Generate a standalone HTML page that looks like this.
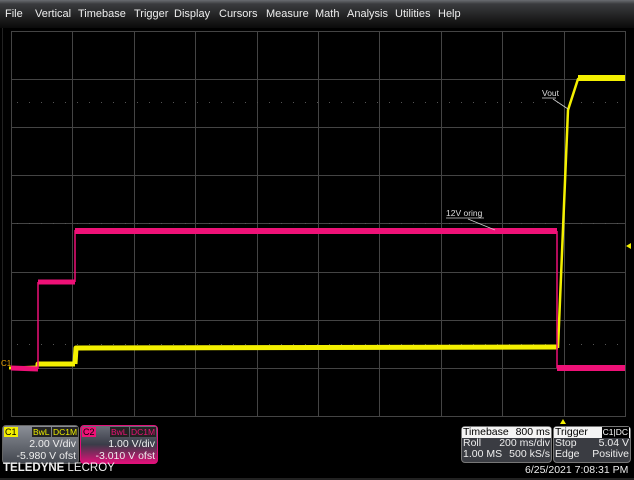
<!DOCTYPE html>
<html><head><meta charset="utf-8"><style>
*{margin:0;padding:0}
body{width:634px;height:480px;background:#000;overflow:hidden;font-family:"Liberation Sans",sans-serif;position:relative}
.menu{position:absolute;left:0;top:0;width:634px;height:28px;background:linear-gradient(#6a6d72 0,#3a3b3e 4px,#1a1a1a 20px,#0a0a0a 28px);color:#eee;font-size:11px}
.menu span{position:absolute;top:8px}
.box{position:absolute;border-radius:4px;font-size:10.5px;color:#eee}
</style></head><body>
<div class="menu">
<span style="left:5px">File</span><span style="left:35px">Vertical</span><span style="left:78px">Timebase</span><span style="left:134px">Trigger</span><span style="left:174px">Display</span><span style="left:219px">Cursors</span><span style="left:266px">Measure</span><span style="left:315px">Math</span><span style="left:347px">Analysis</span><span style="left:395px">Utilities</span><span style="left:438px">Help</span>
</div>
<svg style="position:absolute;left:0;top:0" width="634" height="480">
<line x1="2.5" y1="28" x2="2.5" y2="420" stroke="#222"/>
<g stroke="#444" stroke-width="1">
<rect x="11.5" y="31.5" width="614" height="385" fill="none"/>
<line x1="72.5" y1="31" x2="72.5" y2="417"/><line x1="134.5" y1="31" x2="134.5" y2="417"/><line x1="195.5" y1="31" x2="195.5" y2="417"/><line x1="257.5" y1="31" x2="257.5" y2="417"/><line x1="318.5" y1="31" x2="318.5" y2="417"/><line x1="379.5" y1="31" x2="379.5" y2="417"/><line x1="441.5" y1="31" x2="441.5" y2="417"/><line x1="502.5" y1="31" x2="502.5" y2="417"/><line x1="564.5" y1="31" x2="564.5" y2="417"/>
<line x1="11" y1="79.5" x2="626" y2="79.5"/><line x1="11" y1="127.5" x2="626" y2="127.5"/><line x1="11" y1="175.5" x2="626" y2="175.5"/><line x1="11" y1="223.5" x2="626" y2="223.5"/><line x1="11" y1="272.5" x2="626" y2="272.5"/><line x1="11" y1="320.5" x2="626" y2="320.5"/><line x1="11" y1="368.5" x2="626" y2="368.5"/>
</g>
<g stroke="#555" stroke-dasharray="1 11">
<line x1="17" y1="102.5" x2="626" y2="102.5"/><line x1="17" y1="223.5" x2="626" y2="223.5"/><line x1="17" y1="344.5" x2="626" y2="344.5"/>
</g>
<g fill="none" stroke="#f4f000" stroke-linejoin="round">
<polyline points="9,368 38,367" stroke-width="3"/>
<polyline points="38,366 38,364 75,364" stroke-width="5"/>
<polyline points="75,364 76,348 558,347" stroke-width="5"/>
<polyline points="558,348 568,110 578,79 625,78" stroke-width="2.5"/>
<polyline points="578,78 625,78" stroke-width="6"/>
</g>
<g fill="none" stroke="#ee1177" stroke-linejoin="round">
<polyline points="11,368 38,369" stroke-width="5"/>
<polyline points="38,369 38,282" stroke-width="1.5"/>
<polyline points="38,282 75,282" stroke-width="5"/>
<polyline points="75,282 75,230" stroke-width="1.5"/>
<polyline points="75,231 557,231" stroke-width="6"/>
<polyline points="557,231 557,368" stroke-width="1.5"/>
<polyline points="557,368 625,368" stroke-width="6"/>
</g>
<text x="1" y="366" fill="#e8a000" font-size="8">C1</text>
<text x="542" y="96" fill="#ddd" font-size="8.5">Vout</text>
<line x1="542" y1="98" x2="556" y2="98" stroke="#ccc" stroke-width="0.8"/>
<line x1="553" y1="99" x2="568" y2="109" stroke="#ccc" stroke-width="0.8"/>
<text x="446" y="216" fill="#ddd" font-size="8.5">12V oring</text>
<line x1="446" y1="218" x2="484" y2="218" stroke="#ccc" stroke-width="0.8"/>
<line x1="468" y1="219" x2="495" y2="230" stroke="#ccc" stroke-width="0.8"/>
<polygon points="626,246 631,243 631,249" fill="#f4f000"/>
<polygon points="563,419 560,424 566,424" fill="#f4f000"/>
</svg>
<div class="box" style="left:2px;top:425px;width:75px;height:37px;background:linear-gradient(#8a8e96,#444850);border:1px solid #666">
<span style="position:absolute;left:1px;top:1px;background:#f4f000;color:#000;font-size:9px;padding:0 1px;line-height:10px">C1</span>
<span style="position:absolute;left:29px;top:1px;background:#222;color:#ee0;font-size:8.5px;line-height:10px;padding:0 1px">BwL</span>
<span style="position:absolute;left:49px;top:1px;background:#222;color:#ee0;font-size:8.5px;line-height:10px;padding:0 1px">DC1M</span>
<span style="position:absolute;right:2px;top:12px">2.00 V/div</span>
<span style="position:absolute;right:2px;top:24px">-5.980 V ofst</span>
</div>
<div class="box" style="left:80px;top:425px;width:76px;height:37px;background:linear-gradient(#6a6e78,#3a3c48 50%,#e0107a);border:1px solid #e0107a">
<span style="position:absolute;left:1px;top:1px;background:#ee1177;color:#000;font-size:9px;padding:0 1px;line-height:10px">C2</span>
<span style="position:absolute;left:29px;top:1px;background:#222;color:#e17;font-size:8.5px;line-height:10px;padding:0 1px">BwL</span>
<span style="position:absolute;left:49px;top:1px;background:#222;color:#e17;font-size:8.5px;line-height:10px;padding:0 1px">DC1M</span>
<span style="position:absolute;right:2px;top:12px">1.00 V/div</span>
<span style="position:absolute;right:2px;top:24px">-3.010 V ofst</span>
</div>
<div style="position:absolute;left:3px;top:462px;color:#eee;font-size:11.5px"><b>TELEDYNE</b> LECROY</div>
<div style="position:absolute;left:0;top:478px;width:634px;height:2px;background:#222"></div>
<div class="box" style="left:461px;top:426px;width:89px;height:35px;background:#3a3c42;border:1px solid #777">
<div style="background:#f4f4f4;color:#000;height:11px;line-height:11px;padding:0 1px;border-radius:2px 2px 0 0">Timebase<span style="float:right">800 ms</span></div>
<div style="line-height:11px;padding:0 1px">Roll<span style="float:right">200 ms/div</span></div>
<div style="line-height:11px;padding:0 1px">1.00 MS<span style="float:right">500 kS/s</span></div>
</div>
<div class="box" style="left:553px;top:426px;width:76px;height:35px;background:#3a3c42;border:1px solid #777">
<div style="background:#f4f4f4;color:#000;height:11px;line-height:11px;padding:0 1px;border-radius:2px 2px 0 0">Trigger<span style="float:right;background:#000;color:#fff;font-size:8.5px;padding:0 1px">C1|DC</span></div>
<div style="line-height:11px;padding:0 1px">Stop<span style="float:right">5.04 V</span></div>
<div style="line-height:11px;padding:0 1px">Edge<span style="float:right">Positive</span></div>
</div>
<div style="position:absolute;left:525px;top:464px;color:#eee;font-size:10.5px">6/25/2021 7:08:31 PM</div>
</body></html>
